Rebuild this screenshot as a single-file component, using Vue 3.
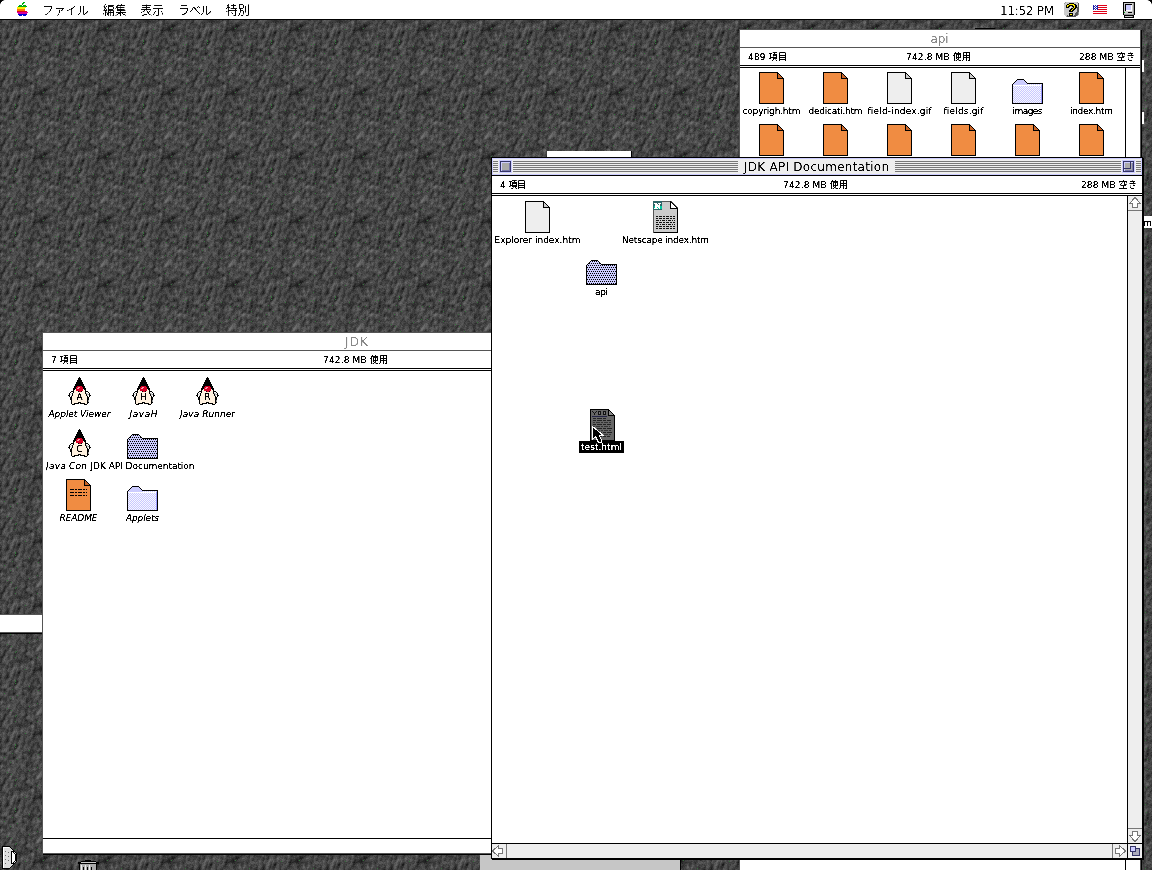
<script setup>
const vFit = {
  mounted(el, { value }) {
    const apply = () => {
      el.style.letterSpacing = '0px'
      const natural = el.getBoundingClientRect().width
      const gaps = Math.max(1, [...el.textContent].length - 1)
      const gap = (value - natural) / gaps
      el.style.letterSpacing = gap + 'px'
      el.style.marginRight = -gap + 'px'
    }
    apply()
    document.fonts.ready.then(apply)
  },
}

// Seamless 64px stone tile: a periodic height field quantised to grey levels.
function stone() {
  let seed = 90217
  const rnd = () => {
    seed = (seed * 1664525 + 1013904223) % 4294967296
    return seed / 4294967296
  }
  const waves = []
  for (let i = 0; i < 160; i++) {
    const m = 1 + rnd() * 11
    const d = (rnd() + rnd() - 1) * 9
    waves.push([Math.round(m + d), Math.round(m * 0.75 - d), rnd() * 6.283, 1 / Math.sqrt(m + 3)])
  }
  const levels = {}
  const put = (c, x, y) => { levels[c] = (levels[c] || '') + `M${x} ${y}h1v1h-1z` }
  for (let y = 0; y < 64; y++) {
    for (let x = 0; x < 64; x++) {
      let h = 0
      for (const [kx, ky, p, a] of waves) h += a * Math.cos((6.28318 * (kx * x + ky * y)) / 64 + p)
      const u = (x - 41 + (y - 29) * 0.9) / 8
      const v = (y - 28) / 6
      const hollow = -26 * Math.exp(-(u * u + v * v))
      const ridge = 8 * Math.exp(-(((x - 46) / 14) ** 2 + ((y - 12) / 12) ** 2))
      const g = 69 + h * 4 + hollow + ridge + (rnd() - 0.5) * 22
      const q = Math.max(24, Math.min(112, Math.round(g / 9) * 9))
      if (rnd() < 0.008) put('#35713a', x, y)
      else put(`rgb(${q},${q},${q})`, x, y)
    }
  }
  return Object.entries(levels)
}
const rock = stone()

const palette = {
  g: '#00ab11', y: '#ffee00', o: '#ff7800', r: '#e00018', m: '#d8009a', b: '#0000d4',
  k: '#000', w: '#fff', l: '#ccc', s: '#999', d: '#555', n: '#2222aa', v: '#ccccff', c: '#fff1df', p: '#ff9aaa', e: '#d60026',
}
function pixels(rows) {
  const out = {}
  rows.forEach((row, y) => [...row].forEach((c, x) => {
    if (c !== '.') out[c] = (out[c] || '') + `M${x} ${y}h1v1h-1z`
  }))
  return Object.entries(out).map(([c, d]) => ({ fill: palette[c], d }))
}
const apple = pixels([
  '......gg...', '.....gg....', '.....g.....', '..ggg.ggg..', '.ggggggggg.', 'yyyyyyyyy..', 'yyyyyyyy...',
  'oooooooo...', 'oooooooo...', 'rrrrrrrrrr.', 'mmmmmmmmmmm', '.mmmmmmmmm.', '.bbbbbbbbb.', '..bbb.bbb..',
])
const help = pixels([
  '.sllllllllllls.', 'sllllkkkkklllld', 'lllkkyyyyykklld', 'llkyykkkkyykkld', 'llkykkllkkykkld', 'llkkkl.llkykkdd',
  'lllllllkkykkldd', 'llllllkkykklldd', 'lllllkkykkllldd', 'lllllkkkklllldd', 'lllllllllllldds', 'lllllkkkkllddds',
  'lllllkyykllddds', '.lldlkkkklddds.', '..sddddddddd...',
])
const flag = pixels([
  'nwnwnrrrrrrrrr', 'nnwnnwwwwwwwww', 'nwnwnrrrrrrrrr', 'nnwnnwwwwwwwww', 'nwnwnrrrrrrrrr', 'wwwwwwwwwwwwww',
  'rrrrrrrrrrrrrr', 'wwwwwwwwwwwwww', 'rrrrrrrrrrrrrr',
])
const mac = pixels([
  'kkkkkkkkkkkk', 'klllllllllsk', 'klkkkkkkklsk', 'klkvvvvvwlsk', 'klkvvvvvwlsk', 'klkvvvvvwlsk', 'klkvvvvvwlsk',
  'klkvvvvvwlsk', 'klkwwwwwwlsk', 'klllllllllsk', 'kglllkkkklsk', 'klllllllllsk', 'kssssssssssk', '.kkkkkkkkkk.', '.klllllllsk.', '.kkkkkkkkkk.',
])
const duke = pixels([
  '...........k...........', '..........kkk..........', '..........kkk..........', '.........kkkkk.........', '.........kkkkk.........',
  '........kkkkkkk........', '........kkkkkkk........', '.......kkkkkkkkk.......', '.......kkkkkkkkk.......', '......kkkeeeeekkk......',
  '......kkeeppeeekk......', '.....kkkeppeeeekkk.....', '.....kkceeeeeeeckk.....', '.....kcceeeeeeecck.....', '...kkkcccckeekccckkk...',
  '..kwwkccccccccccckwwk..', '.kwlkcccccccccccckslwk.', '.klwkcccccccccccccklsk.', 'kkwlkcccccccccccccklwkk', '.kwkccccccccccccccckwk.',
  '..kkccccccccccccccckk..', '..kkccccccccccccccckk..', '..kkccccccccccccccckk..', '...kcccccccccccccccks..', '...kcccccccccccccccks..',
  '...kcccccckkkcccccckk..', '...kcckkkkk.kkkkkcck...', '....kkk.........kkk....',
])

const apiFiles = [
  { t: 'copyrigh.htm', k: 'orange', w: 58 }, { t: 'dedicati.htm', k: 'orange', w: 54 },
  { t: 'field-index.gif', k: 'plain', w: 64 }, { t: 'fields.gif', k: 'plain', w: 40 },
  { t: 'images', k: 'folder', w: 30 }, { t: 'index.htm', k: 'orange', w: 43 },
]
const dukes = [
  { t: 'Applet Viewer', l: 'A', x: 25, y: 6, w: 62 }, { t: 'JavaH', l: 'H', x: 89, y: 6, w: 28 },
  { t: 'Java Runner', l: 'R', x: 153, y: 6, w: 55 }, { t: 'Java Con', l: 'C', x: 25, y: 58, w: 0 },
]
</script>

<template>
  <main class="desktop">
    <svg class="rock" width="1152" height="870" shape-rendering="crispEdges">
      <defs>
        <pattern id="stone" width="64" height="64" patternUnits="userSpaceOnUse">
          <path v-for="[c, d] in rock" :key="c" :fill="c" :d="d" />
        </pattern>
        <pattern id="weave" width="2" height="2" patternUnits="userSpaceOnUse">
          <rect width="2" height="2" fill="#f8f8ff" /><path d="M0 0h1v1H0zM1 1h1v1H1z" fill="#c8c8ff" />
        </pattern>
        <pattern id="dots" width="4" height="4" patternUnits="userSpaceOnUse">
          <rect width="4" height="4" fill="#ccf" /><path d="M0 1h1v1H0zM2 1h1v1H2zM1 3h1v1H1zM3 3h1v1H3z" fill="#000" />
        </pattern>
        <filter id="crisp" x="0" y="0" width="100%" height="100%" color-interpolation-filters="sRGB">
          <feComponentTransfer><feFuncA type="linear" slope="5" intercept="-1.5" /></feComponentTransfer>
        </filter>
        <filter id="thin" x="0" y="0" width="100%" height="100%" color-interpolation-filters="sRGB">
          <feComponentTransfer><feFuncA type="linear" slope="3" intercept="-1.05" /></feComponentTransfer>
        </filter>
        <symbol id="orange" viewBox="0 0 25 32">
          <path d="M.5 .5H18.5L24.5 6.5V31.5H.5z" fill="#f08c42" stroke="#000" />
          <path d="M18.5 .5V6.5H24.5z" fill="#c86428" stroke="#000" />
        </symbol>
        <symbol id="plain" viewBox="0 0 25 32">
          <path d="M.5 .5H18.5L24.5 6.5V31.5H.5z" fill="#eee" stroke="#000" />
          <path d="M18.5 .5V6.5H24.5z" fill="#ccc" stroke="#000" />
        </symbol>
        <symbol id="folder" viewBox="0 0 31 25">
          <path d="M.5 24.5V5.5L4.5 1.5L5.5 .5H11.5L15.5 4.5H30.5V24.5z" fill="url(#weave)" stroke="#000" />
          <path d="M1 6L5 1H11.5L15 5V6z" fill="#ccf" /><path d="M1 6H29V7H1z" fill="#fff" /><path d="M29 6h1v18h-1z" fill="#99f" />
        </symbol>
        <symbol id="open" viewBox="0 0 31 25">
          <path d="M.5 24.5V5.5L4.5 1.5L5.5 .5H11.5L15.5 4.5H30.5V24.5z" fill="url(#dots)" stroke="#000" />
        </symbol>
        <symbol id="duke" viewBox="0 0 23 28"><path v-for="p in duke" :key="p.fill" :fill="p.fill" :d="p.d" /></symbol>
        <symbol id="arrow" viewBox="0 0 12 12">
          <path d="M6 .5L11.500 6.500H8.500V10.500H3.500V6.500H.5z" fill="#fff" stroke="#777" />
        </symbol>
      </defs>
      <rect width="1152" height="870" fill="url(#stone)" />
    </svg>

    <i class="scrap s1"></i><i class="scrap s2"></i><i class="scrap s3"></i><i class="scrap s4"></i>
    <i class="scrap s5"></i><i class="scrap s6"></i><i class="scrap s7"><span class="name">m</span></i>

    <header class="menubar">
      <svg class="apple" width="11" height="14" shape-rendering="crispEdges"><path v-for="p in apple" :key="p.fill" :fill="p.fill" :d="p.d" /></svg>
      <nav class="menus">
        <span v-fit="47">ファイル</span><span v-fit="24">編集</span><span v-fit="24">表示</span><span v-fit="34">ラベル</span><span v-fit="24">特別</span>
      </nav>
      <span class="clock"><span v-fit="54">11:52 PM</span></span>
      <svg class="help" width="15" height="15" shape-rendering="crispEdges"><path v-for="p in help" :key="p.fill" :fill="p.fill" :d="p.d" /></svg>
      <svg class="flag" width="14" height="9" shape-rendering="crispEdges"><path v-for="p in flag" :key="p.fill" :fill="p.fill" :d="p.d" /></svg>
      <svg class="mac" width="12" height="16" shape-rendering="crispEdges"><path v-for="p in mac" :key="p.fill" :fill="p.fill" :d="p.d" /></svg>
    </header>

    <section class="win api">
      <div class="title idle"><span v-fit="18">api</span></div>
      <div class="info"><span v-fit="39">489 項目</span><span v-fit="65">742.8 MB 使用</span><span v-fit="56">288 MB 空き</span></div>
      <div class="body">
        <div class="files">
          <div v-for="f in apiFiles" :key="f.t" class="file">
            <div class="pic"><svg v-if="f.k === 'folder'" width="31" height="25" shape-rendering="crispEdges"><use href="#folder" /></svg><svg v-else width="25" height="32" shape-rendering="crispEdges"><use :href="'#' + f.k" /></svg></div>
            <span v-fit="f.w" class="name">{{ f.t }}</span>
          </div>
          <div v-for="n in 6" :key="n" class="file"><div class="pic"><svg width="25" height="32" shape-rendering="crispEdges"><use href="#orange" /></svg></div></div>
        </div>
        <div class="gutter"></div>
      </div>
    </section>

    <section class="win jdk">
      <div class="title idle"><span v-fit="23">JDK</span></div>
      <div class="info"><span v-fit="27">7 項目</span><span v-fit="65">742.8 MB 使用</span><span></span></div>
      <div class="canvas">
        <div v-for="d in dukes" :key="d.l" class="item" :style="{ left: d.x + 'px', top: d.y + 'px' }">
          <svg width="23" height="28" shape-rendering="crispEdges"><use href="#duke" /></svg><b class="letter">{{ d.l }}</b>
          <span v-if="d.w" v-fit="d.w" class="name ital low">{{ d.t }}</span>
        </div>
        <span class="cut"><span v-fit="41" class="ital">Java Con</span></span>
        <div class="item jfolder"><svg width="31" height="25" shape-rendering="crispEdges"><use href="#open" /></svg><span v-fit="104" class="name">JDK API Documentation</span></div>
        <div class="item readme"><svg width="25" height="32" shape-rendering="crispEdges"><use href="#orange" /><path d="M4 10.500H21M4 13.500H21M4 16.500H21" stroke="#000" stroke-dasharray="4 1 2 1" /></svg><span v-fit="38" class="name ital">README</span></div>
        <div class="item applets"><svg width="31" height="25" shape-rendering="crispEdges"><use href="#folder" /></svg><span v-fit="33" class="name ital">Applets</span></div>
      </div>
      <div class="foot"></div>
    </section>

    <section class="win front">
      <div class="title live">
        <i class="stripes end"></i><i class="box"></i><i class="stripes"></i>
        <span class="caption"><span v-fit="145">JDK API Documentation</span></span>
        <i class="stripes right"></i><i class="box zoom"></i><i class="stripes end"></i>
      </div>
      <div class="info"><span v-fit="26">4 項目</span><span v-fit="65">742.8 MB 使用</span><span v-fit="56">288 MB 空き</span></div>
      <div class="panes">
        <div class="canvas">
          <div class="item explorer"><svg width="25" height="32" shape-rendering="crispEdges"><use href="#plain" /></svg><span v-fit="86" class="name">Explorer index.htm</span></div>
          <div class="item netscape">
            <svg width="25" height="32" shape-rendering="crispEdges">
              <path d="M.5 .5H18.500L24.500 6.500V31.500H.5z" fill="#ccc" stroke="#555" /><path d="M24.500 7V31.500H1" fill="none" stroke="#000" /><path d="M17.500 .5V7.500H24.500z" fill="#fff" stroke="#000" />
              <path d="M0 0h9v9H0z" fill="#2d6468" /><path d="M1 5h8v3H1z" fill="#00c9a0" /><path d="M1 2h3v1h1v1h1V3H5V2h3v1H7v5H6V7H5V6H4v1h1v1H1V7h1V3H1z" fill="#fff" />
              <path d="M3 15.500H22M3 17.500H22M3 21.500H22M3 25.500H22M3 27.500H22" stroke="#111" stroke-dasharray="2 1 3 1" /><path d="M3 19.500H22M3 23.500H22" stroke="#111" stroke-dasharray="3 1 1 1" />
            </svg><span v-fit="87" class="name">Netscape index.htm</span>
          </div>
          <div class="item apifolder"><svg width="31" height="25" shape-rendering="crispEdges"><use href="#open" /></svg><span v-fit="13" class="name">api</span></div>
          <div class="item test">
            <svg width="25" height="32" shape-rendering="crispEdges">
              <path d="M.5 .5H18.500L24.500 6.500V31.500H.5z" fill="#666" stroke="#000" /><path d="M18.500 .5V6.500H24.500z" fill="#888" stroke="#000" />
              <path d="M2 2h1v1h1v1h1V3h1V2h1v1H6v1H5v2H4V4H3V3H2zM8 2h3v4H8zM13 2h3v4h-3z" fill="#111" /><path d="M9 3h1v2H9zM14 3h1v2h-1z" fill="#777" /><path d="M2 7h15v1H2z" fill="#224" />
              <path d="M3 9.500H17M3 11.500H21M3 15.500H21M3 19.500H22M3 23.500H22M3 27.500H20" stroke="#222" stroke-dasharray="3 1 5 1" /><path d="M3 13.500H22M3 17.500H20M3 21.500H21M3 25.500H22" stroke="#333" stroke-dasharray="2 1 4 1" />
            </svg><span class="picked"><span v-fit="41" class="name">test.html</span></span>
          </div>
          <svg class="cursor" width="13" height="18" shape-rendering="crispEdges"><path d="M.5 .5V13.500L3.500 10.500L6.500 16.500H9.500V14.500L7.500 9.500H11.500z" fill="#000" stroke="#fff" /></svg>
        </div>
        <div class="vbar"><span><svg width="12" height="12" shape-rendering="crispEdges"><use href="#arrow" /></svg></span><span class="down"><svg width="12" height="12" shape-rendering="crispEdges"><use href="#arrow" /></svg></span></div>
        <div class="hbar"><span class="lft"><svg width="12" height="12" shape-rendering="crispEdges"><use href="#arrow" /></svg></span><span class="rgt"><svg width="12" height="12" shape-rendering="crispEdges"><use href="#arrow" /></svg></span></div>
        <div class="grow"><svg width="12" height="12" shape-rendering="crispEdges"><path d="M4.500 3.500h6v7h-7v-4" fill="#aab" stroke="#336" /><path d="M1.500 1.500h5v5h-5z" fill="#ccf" stroke="#336" /></svg></div>
      </div>
    </section>

    <svg class="strip" width="17" height="24" shape-rendering="crispEdges">
      <path d="M.5 .5H7.500L14.500 7.500V15.500L7.500 22.500H.5z" fill="#ddd" stroke="#000" /><path d="M1 1h6M1.500 1v21" stroke="#fff" />
      <path d="M3 5h1v1H3zM6 6h1v1H6zM3 9h1v1H3zM6 10h1v1H6zM3 13h1v1H3zM6 14h1v1H6zM3 17h1v1H3z" fill="#666" />
      <path d="M9.500 5.500V17.500H11L13.500 14.500V8.500L11 5.500z" fill="#fff" stroke="#000" />
    </svg>
    <svg class="trash" width="21" height="11" shape-rendering="crispEdges">
      <path d="M7 0h6v1h5v1h3v2H0V2h3V1h4z" fill="#000" /><path d="M3 2h15v1H3z" fill="#ccc" /><path d="M2 4h17v7H2z" fill="#aaa" />
      <path d="M1.500 4v7M5.500 7v3M9.500 7v3M13.500 7v3M18.500 4v7" stroke="#000" /><path d="M3.500 5v6M7.500 5v6M11.500 5v6" stroke="#eee" />
    </svg>
  </main>
</template>

<style>
html, body { margin: 0; overflow: hidden; background: #444; }
</style>
<style scoped>
* { box-sizing: border-box; }
.desktop { position: relative; width: 1152px; height: 870px; overflow: hidden; font: 9px/12px "DejaVu Sans", "Noto Sans CJK JP", sans-serif; color: #000; white-space: nowrap; }
svg { display: block; flex: none; }
.rock { position: absolute; inset: 0; }
.menubar { position: absolute; inset: 0 0 auto; height: 20px; background: #fff; border-bottom: 1px solid #000; display: flex; align-items: center; font-size: 12px; }
.menubar::before, .menubar::after { content: ""; position: absolute; top: 0; width: 5px; height: 5px; background: radial-gradient(circle at 5px 5px, #fff 4.500px, #000 5px); left: 0; }
.menubar::after { left: auto; right: 0; background: radial-gradient(circle at 0 5px, #fff 4.500px, #000 5px); }
.apple { margin: -1px 14px 0 17px; }
.menus { display: flex; gap: 13.700px; font-family: "Noto Sans CJK JP", sans-serif; font-weight: 300; filter: url(#crisp); line-height: 18px; }
.clock { margin-left: auto; margin-right: 10px; filter: url(#thin); line-height: 18px; padding-top: 2px; }
.help { margin-right: 14px; margin-top: -1px; }
.flag { margin-right: 16px; }
.mac { margin-right: 17px; }
.win { position: absolute; background: #fff; display: flex; flex-direction: column; }
.win.api { left: 739px; top: 29px; width: 402px; height: 850px; border: 1px solid #555; box-shadow: 1px 1px #000; }
.win.jdk { left: 42px; top: 332px; width: 630px; height: 522px; border: 1px solid #555; box-shadow: 1px 1px #000; }
.win.front { left: 491px; top: 157px; width: 652px; height: 702px; border: 1px solid #000; box-shadow: 1px 1px #000; }
.title { height: 18px; flex: none; display: flex; justify-content: center; align-items: center; border-bottom: 1px solid #555; font-size: 12px; }
.idle { color: #888; }
.idle span { filter: url(#thin); display: block; line-height: 18px; margin-left: -1px; }
.live { background: #eee; border-bottom-color: #000; box-shadow: inset 0 0 0 1px #ccf; padding: 0 1px; }
.stripes { flex: 1; height: 11px; background: repeating-linear-gradient(#777 0 1px, #eee 1px 2px); }
.stripes.end { flex: 0 0 5px; }
.box { flex: none; width: 11px; height: 11px; margin: 0 2px; border: 1px solid #336; background: #aaa; box-shadow: inset 1px 1px #ccf, inset -1px -1px #77a, 0 0 0 1px #ccf; position: relative; }
.zoom::after { content: ""; position: absolute; left: 0; top: 0; width: 6px; height: 6px; border: solid #336; border-width: 0 1px 1px 0; }
.caption { flex: none; width: 157px; display: flex; justify-content: center; filter: url(#thin); line-height: 17px; padding: 1px 0 0 0; }
.stripes.right { flex: 0 0 226px; }
.info { height: 20px; flex: none; border-bottom: 3px double #000; display: grid; grid-template-columns: 1fr auto 1fr; align-items: center; padding: 0 5px 0 8px; }
.info span { filter: url(#crisp); justify-self: start; }
.info span:nth-child(2) { position: relative; left: -3px; }
.info span:last-child { justify-self: end; }
.body { display: flex; flex: 1; min-height: 0; }
.files { width: 386px; flex: none; display: grid; grid-template-columns: repeat(6, 64px); grid-auto-rows: 52px; padding-top: 4px; overflow: hidden; margin-left: -1px; align-content: start; }
.file { display: flex; flex-direction: column; align-items: center; width: 65px; }
.pic { height: 32px; display: flex; align-items: flex-end; }
.name { filter: url(#crisp); flex: none; line-height: 12px; }
.file .name { margin-top: 1px; }
.gutter { border-left: 1px solid #000; flex: 1; }
.canvas { position: relative; flex: 1; }
.item { position: absolute; display: flex; flex-direction: column; align-items: center; width: 23px; }
.item .name { margin-top: 1px; }
.item .low { margin-top: 3px; }
.letter { position: absolute; top: 15px; left: 0; width: 23px; text-align: center; font-size: 9px; line-height: 10px; font-weight: 400; filter: url(#crisp); }
.ital { font-style: italic; }
.cut { position: absolute; left: 3px; top: 89px; width: 43px; overflow: hidden; filter: url(#crisp); }
.jfolder { left: 84px; top: 63px; width: 31px; }
.readme { left: 23px; top: 108px; width: 25px; }
.applets { left: 84px; top: 115px; width: 31px; }
.foot { height: 15px; border-top: 1px solid #000; flex: none; }
.panes { flex: 1; display: grid; grid-template-columns: 1fr 15px; grid-template-rows: 1fr 15px; min-height: 0; }
.explorer { left: 33px; top: 5px; width: 25px; }
.netscape { left: 161px; top: 5px; width: 25px; }
.apifolder { left: 94px; top: 64px; width: 31px; }
.test { left: 98px; top: 213px; width: 25px; }
.picked { display: flex; margin-left: -2px; background: #000; color: #fff; padding: 0 2px; width: 45px; height: 12px; flex: none; }
.picked .name { margin-top: 0; }
.cursor { position: absolute; left: 100px; top: 230px; }
.vbar { border-left: 1px solid #000; background: #eee; display: flex; flex-direction: column; justify-content: space-between; }
.vbar span { height: 15px; border-bottom: 1px solid #777; display: flex; align-items: center; justify-content: center; }
.vbar .down { border-bottom: 0; border-top: 1px solid #777; }
.down svg { transform: rotate(180deg); }
.hbar { border-top: 1px solid #000; background: #eee; display: flex; justify-content: space-between; }
.hbar span { width: 15px; display: flex; align-items: center; justify-content: center; }
.lft { border-right: 1px solid #777; padding-right: 2px; }
.rgt { border-left: 1px solid #777; }
.lft svg { transform: rotate(-90deg); }
.rgt svg { transform: rotate(90deg); }
.grow { border: solid #000; border-width: 1px 0 0 1px; background: #eee; display: flex; align-items: center; justify-content: center; }
.scrap { position: absolute; background: #fff; font-style: normal; }
.s1 { left: 0; top: 614px; width: 43px; height: 19px; border: solid #555; border-width: 1px 0; box-shadow: 0 1px #000; }
.s2 { left: 547px; top: 151px; width: 84px; height: 8px; box-shadow: 1px 0 #000; }
.s3 { left: 480px; top: 855px; width: 200px; height: 15px; background: #c6c6c6; box-shadow: 1px 0 #000; }
.s4 { left: 1142px; top: 60px; width: 2px; height: 12px; }
.s5 { left: 1142px; top: 112px; width: 2px; height: 12px; }
.s6 { left: 975px; top: 28px; width: 20px; height: 1px; background: #000; }
.s7 { left: 1142px; top: 216px; width: 10px; height: 12px; display: flex; justify-content: flex-end; padding-top: 1px; }
.strip { position: absolute; left: 2px; top: 846px; }
.trash { position: absolute; left: 78px; top: 860px; }
</style>
